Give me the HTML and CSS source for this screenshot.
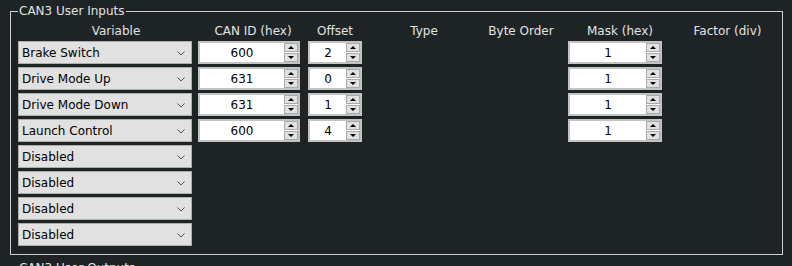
FILE: index.html
```html
<!DOCTYPE html>
<html lang="en">
<head>
    <meta charset="UTF-8">
    <title>CAN3 User Inputs</title>
    <link rel="stylesheet" href="styles.css">
</head>
<body>
    <fieldset class="group">
        <legend>CAN3 User Inputs</legend>
        <div class="grid">
            <div class="head h-var">Variable</div>
            <div class="head h-id">CAN ID (hex)</div>
            <div class="head h-off">Offset</div>
            <div class="head h-type">Type</div>
            <div class="head h-byte">Byte Order</div>
            <div class="head h-mask">Mask (hex)</div>
            <div class="head h-factor">Factor (div)</div>

            <!-- row 1 -->
            <div class="combo"><span>Brake Switch</span><svg width="8" height="5" viewBox="0 0 8 5"><path d="M0.5 0.5 L4 4 L7.5 0.5" fill="none" stroke="#555" stroke-width="1"/></svg></div>
            <div class="spin can-id"><span class="val">600</span><div class="btns"><div class="btn up"></div><div class="btn down"></div></div></div>
            <div class="spin offset"><span class="val">2</span><div class="btns"><div class="btn up"></div><div class="btn down"></div></div></div>
            <div class="spin mask"><span class="val">1</span><div class="btns"><div class="btn up"></div><div class="btn down"></div></div></div>

            <!-- row 2 -->
            <div class="combo"><span>Drive Mode Up</span><svg width="8" height="5" viewBox="0 0 8 5"><path d="M0.5 0.5 L4 4 L7.5 0.5" fill="none" stroke="#555" stroke-width="1"/></svg></div>
            <div class="spin can-id"><span class="val">631</span><div class="btns"><div class="btn up"></div><div class="btn down"></div></div></div>
            <div class="spin offset"><span class="val">0</span><div class="btns"><div class="btn up"></div><div class="btn down"></div></div></div>
            <div class="spin mask"><span class="val">1</span><div class="btns"><div class="btn up"></div><div class="btn down"></div></div></div>

            <!-- row 3 -->
            <div class="combo"><span>Drive Mode Down</span><svg width="8" height="5" viewBox="0 0 8 5"><path d="M0.5 0.5 L4 4 L7.5 0.5" fill="none" stroke="#555" stroke-width="1"/></svg></div>
            <div class="spin can-id"><span class="val">631</span><div class="btns"><div class="btn up"></div><div class="btn down"></div></div></div>
            <div class="spin offset"><span class="val">1</span><div class="btns"><div class="btn up"></div><div class="btn down"></div></div></div>
            <div class="spin mask"><span class="val">1</span><div class="btns"><div class="btn up"></div><div class="btn down"></div></div></div>

            <!-- row 4 -->
            <div class="combo"><span>Launch Control</span><svg width="8" height="5" viewBox="0 0 8 5"><path d="M0.5 0.5 L4 4 L7.5 0.5" fill="none" stroke="#555" stroke-width="1"/></svg></div>
            <div class="spin can-id"><span class="val">600</span><div class="btns"><div class="btn up"></div><div class="btn down"></div></div></div>
            <div class="spin offset"><span class="val">4</span><div class="btns"><div class="btn up"></div><div class="btn down"></div></div></div>
            <div class="spin mask"><span class="val">1</span><div class="btns"><div class="btn up"></div><div class="btn down"></div></div></div>

            <!-- disabled rows -->
            <div class="combo"><span>Disabled</span><svg width="8" height="5" viewBox="0 0 8 5"><path d="M0.5 0.5 L4 4 L7.5 0.5" fill="none" stroke="#555" stroke-width="1"/></svg></div>
            <div class="combo"><span>Disabled</span><svg width="8" height="5" viewBox="0 0 8 5"><path d="M0.5 0.5 L4 4 L7.5 0.5" fill="none" stroke="#555" stroke-width="1"/></svg></div>
            <div class="combo"><span>Disabled</span><svg width="8" height="5" viewBox="0 0 8 5"><path d="M0.5 0.5 L4 4 L7.5 0.5" fill="none" stroke="#555" stroke-width="1"/></svg></div>
            <div class="combo"><span>Disabled</span><svg width="8" height="5" viewBox="0 0 8 5"><path d="M0.5 0.5 L4 4 L7.5 0.5" fill="none" stroke="#555" stroke-width="1"/></svg></div>
        </div>
    </fieldset>

    <fieldset class="group next">
        <legend>CAN3 User Outputs</legend>
    </fieldset>
</body>
</html>
```

FILE: styles.css
```css
body {
    margin: 0;
    padding: 5px 0 0 0;
    background-color: #1e2425;
    color: #e2e2e2;
    font-family: "DejaVu Sans", sans-serif;
    font-size: 12px;
    overflow: hidden;
}

.group {
    margin: 0 9px 0 10px;
    padding: 0 0 8px 7px;
    border: 1px solid #cfcfcf;
}

.group legend {
    padding: 0 1px;
    line-height: 12px;
}

.next {
    margin-top: 7px;
    height: 40px;
}

.grid {
    display: grid;
    grid-template-columns: 180px 110px 54px 124px 82px 94px 1fr;
    grid-template-rows: 21px repeat(8, 23px);
    row-gap: 3px;
}

.head {
    align-self: end;
    line-height: 14px;
    text-align: center;
    white-space: nowrap;
}

.h-var { width: 174px; padding-left: 22px; box-sizing: border-box; }
.h-id { width: 102px; padding-left: 8px; box-sizing: border-box; }
.h-byte { padding-right: 12px; }
.h-mask { padding-left: 10px; }
.h-factor { padding-left: 11px; }

.combo {
    grid-column: 1;
    width: 174px;
    box-sizing: border-box;
    display: flex;
    align-items: center;
    justify-content: space-between;
    padding: 0 6px 0 3px;
    background-color: #e1e1e1;
    border: 1px solid #adadad;
    color: #000;
}

.combo svg {
    margin-top: 1px;
}

.spin {
    box-sizing: border-box;
    display: flex;
    align-items: center;
    background-color: #fff;
    border: 2px solid #c3c3c3;
    color: #000;
}

.can-id { grid-column: 2; width: 102px; }
.offset { grid-column: 3; width: 54px; }
.mask { grid-column: 6; width: 94px; }

.val {
    flex: 1;
    text-align: center;
}

.btns {
    display: flex;
    flex-direction: column;
    gap: 1px;
    width: 14px;
    height: 19px;
}

.btn {
    flex: 1;
    box-sizing: border-box;
    background-color: #e1e1e1;
    border: 1px solid #a9a9a9;
    display: flex;
    align-items: center;
    justify-content: center;
}

.btn.up::after {
    content: "";
    border-left: 3px solid transparent;
    border-right: 3px solid transparent;
    border-bottom: 3px solid #000;
}

.btn.down::after {
    content: "";
    border-left: 3px solid transparent;
    border-right: 3px solid transparent;
    border-top: 3px solid #000;
}
```
